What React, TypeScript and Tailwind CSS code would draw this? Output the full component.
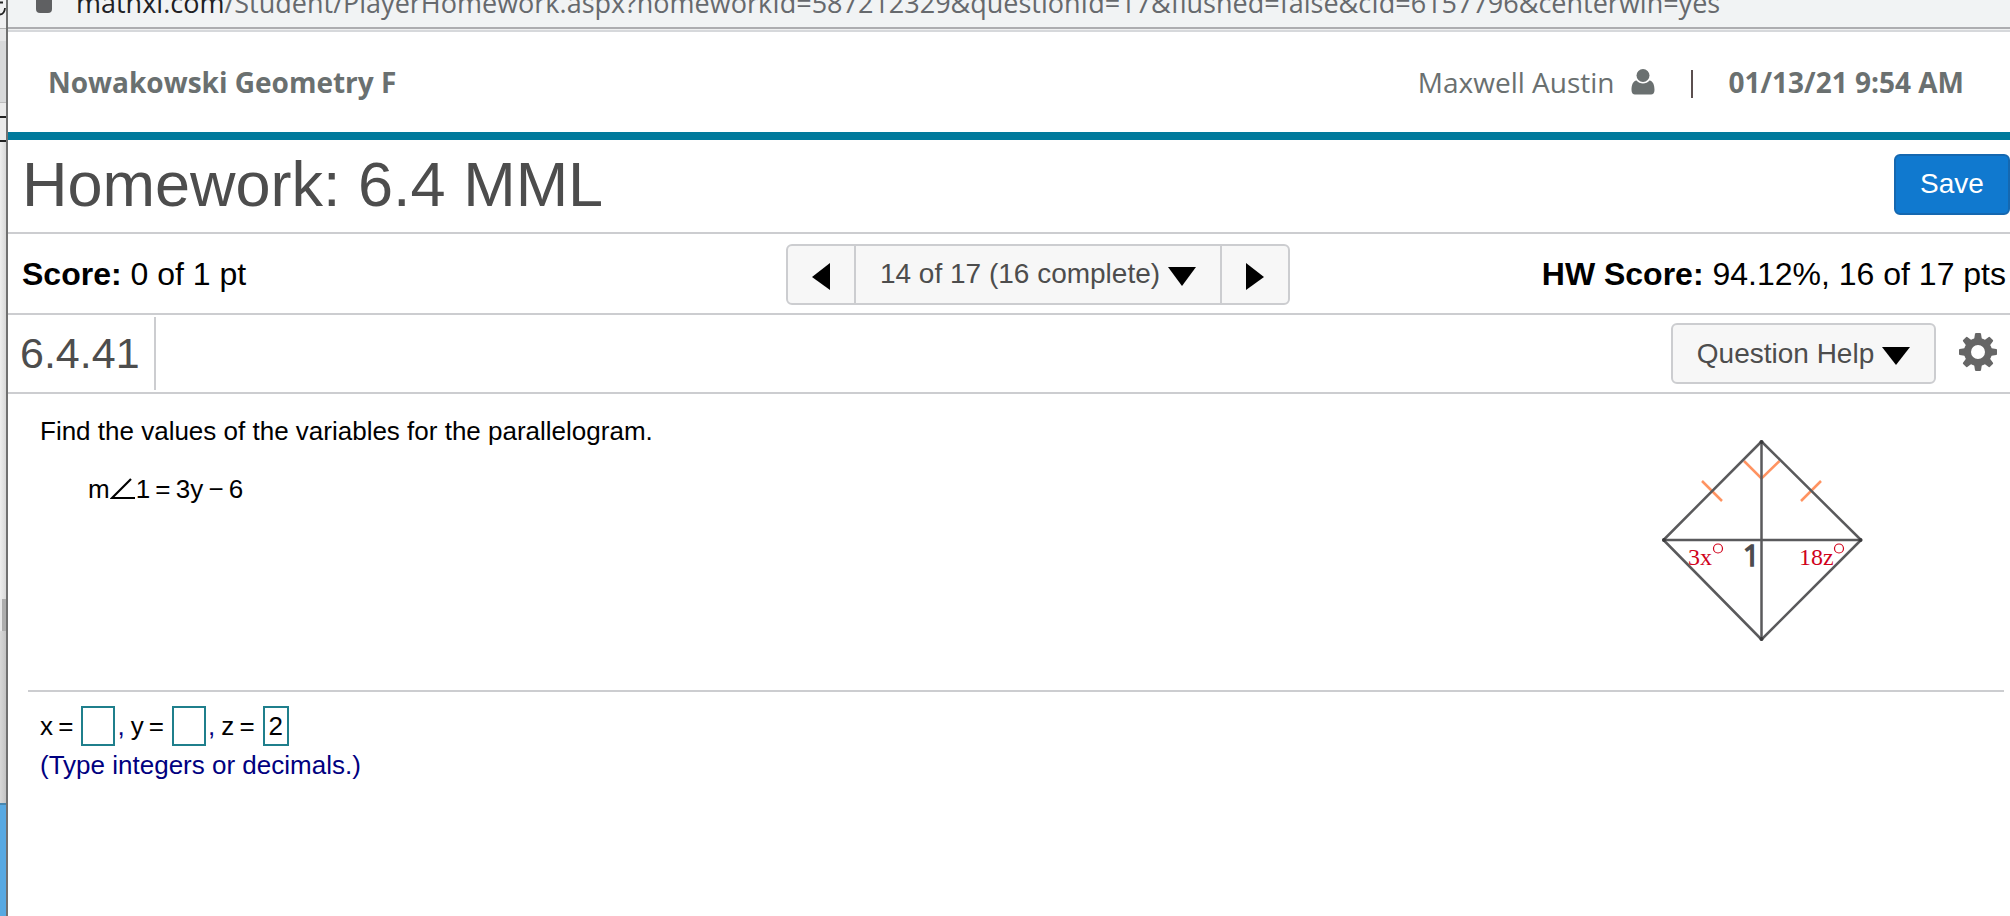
import { useState } from 'react'

interface AnswerFieldProps {
  name: string
  value: string
  onChange: (value: string) => void
}

function AnswerField({ name, value, onChange }: AnswerFieldProps) {
  return (
    <span className="flex items-center">
      <label htmlFor={`answer-${name}`} className="whitespace-pre text-black">{name}&#8201;=</label>
      <input
        id={`answer-${name}`}
        type="text"
        value={value}
        onChange={e => onChange(e.target.value)}
        className={`ml-2 h-10 border-2 border-[#1f7f8c] bg-white text-center text-black outline-none ${value ? 'w-[26px]' : 'w-[34px]'}`}
      />
    </span>
  )
}

function Triangle({ points, className }: { points: string; className: string }) {
  return (
    <svg viewBox="0 0 28 28" className={className} aria-hidden="true">
      <polygon points={points} fill="#000" />
    </svg>
  )
}

function UserIcon() {
  return (
    <svg viewBox="0 0 24 26" className="h-[26px] w-6" fill="#6a7070" aria-hidden="true">
      <ellipse cx="12" cy="6.500" rx="6.500" ry="6.500" />
      <path d="M5.500 11.500C2 12 .5 16 .5 21c0 3 1.500 4.500 3.500 4.500h16c2 0 3.500-1.500 3.500-4.500 0-5-1.500-9-5-9.500C17 13.500 14.500 14.500 12 14.500s-5-1-6.500-3z" />
    </svg>
  )
}

function GearIcon() {
  return (
    <svg viewBox="-20 -20 40 40" className="size-10" fill="#666" aria-hidden="true">
      {[0, 45, 90, 135, 180, 225, 270, 315].map(a => (
        <path key={a} d="M-4-12L-3-18.200Q-2.800-19-2-19H2Q2.800-19 3-18.200L4-12z" transform={`rotate(${a})`} />
      ))}
      <circle r="10.500" fill="none" stroke="#666" strokeWidth="7" />
    </svg>
  )
}

function Figure() {
  return (
    <svg viewBox="0 0 280 240" className="h-60 w-[280px]" role="img" aria-label="Parallelogram with diagonals">
      <g fill="none" stroke="#ff9361" strokeWidth="2.500">
        <path d="M124 41L141.500 58.500L159.500 41" />
        <path d="M82 61L102 81M201 61L181 81" />
      </g>
      <g fill="none" stroke="#5a5a5c" strokeWidth="2.500" strokeLinejoin="round">
        <path d="M141.500 21.500L241 120L141.500 219.500L43.500 120z" />
        <path d="M43.500 120H241M141.500 21.500V219.500" />
      </g>
      <g fill="#3a3a3c">
        <circle cx="141.500" cy="22" r="2" />
        <circle cx="141.500" cy="219" r="2" />
        <circle cx="44" cy="120" r="2" />
        <circle cx="240.500" cy="120" r="2" />
      </g>
      <g fill="#d0021b" fontSize="24" style={{ fontFamily: '"Liberation Serif", serif' }}>
        <text x="68" y="145">3x</text>
        <text x="179" y="145">18z</text>
      </g>
      <g fill="none" stroke="#d0021b" strokeWidth="1.200">
        <circle cx="98" cy="128.500" r="4.500" />
        <circle cx="219" cy="128.500" r="4.500" />
      </g>
      <text x="123" y="146" fill="#4c4c4e" stroke="#4c4c4e" strokeWidth="1.500" fontSize="29" style={{ fontFamily: '"Open Sans", sans-serif' }}>1</text>
    </svg>
  )
}

// sliver of the windows sitting behind the player popup
function BackgroundWindows() {
  return (
    <div className="flex w-2 shrink-0 flex-col border-r-2 border-[#707070] bg-[#e6e6e7]" aria-hidden="true">
      <div className="h-7 bg-[#f0f0f1]">
        <svg viewBox="0 0 6 28" className="h-7 w-1.5">
          <path d="M0 2.500H3M0 14.500Q4.500 14 5 8" fill="none" stroke="#222" strokeWidth="1.800" />
        </svg>
      </div>
      <div className="h-px bg-[#b5b5b5]" />
      <div className="h-3 bg-[#e6e6e7]" />
      <div className="h-[61px] bg-[#d8d9da]" />
      <div className="h-px bg-[#bdbdbd]" />
      <div className="h-[13px] bg-[#eaeaea]" />
      <div className="h-0.5 bg-[#222]" />
      <div className="h-[22px] bg-[#eaeaea]" />
      <div className="h-0.5 bg-[#222]" />
      <div className="h-[457px] bg-linear-to-r from-[#eeeeee] to-[#d8d8d8]" />
      <div className="ml-0.5 h-8 bg-[#adadad]" />
      <div className="h-[172px] bg-linear-to-r from-[#d8d8d8] to-[#c4c4c4]" />
      <div className="flex-1 border-t-2 border-[#4787b0] bg-[#58a9e2]" />
    </div>
  )
}

export default function App() {
  const [answers, setAnswers] = useState({ x: '', y: '', z: '2' })

  return (
    <div className="flex min-h-screen overflow-hidden bg-white font-['Liberation_Sans',Arial,sans-serif] text-black">
      <BackgroundWindows />

      <div className="min-w-0 flex-1">
        <div className="flex h-[27px] items-end overflow-hidden bg-[#f1f3f4] pl-7">
          <span className="mb-3.5 h-5 w-4 shrink-0 rounded-sm bg-[#5f6062]" />
          <span className="mb-1.5 ml-6 font-['Open_Sans',sans-serif] text-[27px] leading-9 whitespace-nowrap text-[#66696d]">
            <span className="text-[#202124]">mathxl.com</span>
            /Student/PlayerHomework.aspx?homeworkId=587212329&amp;questionId=17&amp;flushed=false&amp;cId=6157796&amp;centerwin=yes
          </span>
        </div>
        <div className="h-[5px] border-t-2 border-b-2 border-t-[#adadb0] border-b-[#d6d8db] bg-[#eeeff0]" />

        <header className="flex h-27 items-center justify-between border-b-8 border-[#007a9c] pr-[46px] pl-10 font-['Open_Sans',sans-serif] text-[28px] text-[#6a7070]">
          <span className="font-bold">Nowakowski Geometry F</span>
          <div className="flex items-center">
            <span>Maxwell Austin</span>
            <span className="ml-4"><UserIcon /></span>
            <span className="mt-1 ml-9 h-7 w-0.5 bg-[#5b4f4f]" />
            <span className="ml-9 font-bold">01/13/21 9:54 AM</span>
          </div>
        </header>

        <div className="flex h-[94px] items-center justify-between border-b-2 border-[#cccdd0] pb-1 pl-3.5">
          <h1 className="text-[63px] leading-none text-[#4d4d4d]">Homework: 6.4 MML</h1>
          <button className="h-[61px] w-[116px] rounded-md border-2 border-[#1568b0] bg-[#1079cf] text-[28px] text-white">Save</button>
        </div>

        <div className="grid h-[81px] grid-cols-[1fr_auto_1fr] items-center border-b-2 border-[#cccdd0] pt-px pr-1 pl-3.5 text-[32px]">
          <div><b>Score:</b> 0 of 1 pt</div>
          <div className="ml-12 flex h-[61px] overflow-hidden rounded-md border-2 border-[#cccdd0] bg-[#f7f7f7] text-[28px] text-[#4d4d4d]">
            <button className="flex w-[66px] items-center justify-center pt-1" aria-label="Previous question">
              <Triangle points="5,15 23,1 23,28" className="size-7" />
            </button>
            <button className="flex w-[368px] items-center justify-center gap-2 border-x-2 border-[#cccdd0]">
              14 of 17 (16 complete)
              <Triangle points="0,7 28,7 14,26" className="size-7" />
            </button>
            <button className="flex w-[66px] items-center justify-center pt-1" aria-label="Next question">
              <Triangle points="5,1 23,15 5,28" className="size-7" />
            </button>
          </div>
          <div className="text-right"><b>HW Score:</b> 94.12%, 16 of 17 pts</div>
        </div>

        <div className="flex h-[79px] items-center justify-between border-b-2 border-[#cccdd0] pr-3 pl-3">
          <h2 className="flex h-[73px] items-center border-r-2 border-[#cccdd0] pr-3.5 text-[43px] text-[#4d4d4d]">6.4.41</h2>
          <div className="flex items-center">
            <button className="flex h-[61px] w-[265px] items-center justify-center gap-2 rounded-md border-2 border-[#cccdd0] bg-[#f7f7f7] text-[28px] text-[#4d4d4d]">
              Question Help
              <Triangle points="0,7 28,7 14,25" className="size-7" />
            </button>
            <button className="ml-[22px] pb-1" aria-label="Settings"><GearIcon /></button>
          </div>
        </div>

        <main className="pr-1.5 pl-5 text-[26px] leading-[38px]">
          <div className="flex h-[298px] justify-between border-b-2 border-[#cccdd0] pt-[18px] pr-26 pl-3">
            <div>
              <p>Find the values of the variables for the parallelogram.</p>
              <p className="mt-5 flex items-center pl-12">
                m
                <svg viewBox="0 0 26 22" className="h-[22px] w-[26px]" role="img" aria-label="angle">
                  <path d="M21 1L2 20H25" fill="none" stroke="#000" strokeWidth="2.200" />
                </svg>
                <span>1&#8201;=&#8201;3y&#8201;&minus;&#8201;6</span>
              </p>
            </div>
            <div className="pt-2"><Figure /></div>
          </div>

          <div className="pt-3.5 pl-3 text-[#000080]">
            <div className="flex items-center">
              <AnswerField name="x" value={answers.x} onChange={x => setAnswers({ ...answers, x })} />
              <span className="mr-1.5 ml-0.5">,</span>
              <AnswerField name="y" value={answers.y} onChange={y => setAnswers({ ...answers, y })} />
              <span className="mr-1.5 ml-0.5">,</span>
              <AnswerField name="z" value={answers.z} onChange={z => setAnswers({ ...answers, z })} />
            </div>
            <p>(Type integers or decimals.)</p>
          </div>
        </main>
      </div>
    </div>
  )
}
